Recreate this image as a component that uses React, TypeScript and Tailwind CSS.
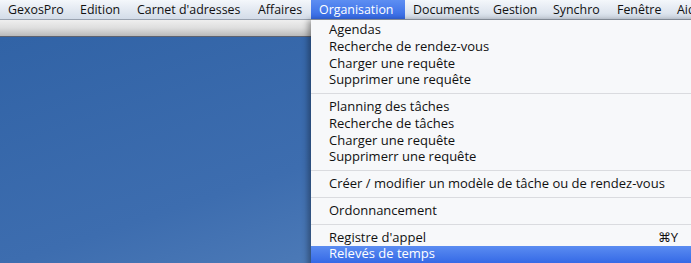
import React from 'react';

const menuBar = [
  { label: 'GexosPro', w: 'w-[72px]' },
  { label: 'Edition', w: 'w-[57px]' },
  { label: "Carnet d'adresses", w: 'w-[121px]' },
  { label: 'Affaires', w: 'w-[61px]' },
  { label: 'Organisation', w: 'w-[94px]', active: true },
  { label: 'Documents', w: 'w-[80px]' },
  { label: 'Gestion', w: 'w-[60px]' },
  { label: 'Synchro', w: 'w-[64px]' },
  { label: 'Fenêtre', w: 'w-[60px]' },
  { label: 'Aide', w: 'w-[60px]' },
];

type Item = { label: string; shortcut?: string; selected?: boolean };

const groups: Item[][] = [
  [
    { label: 'Agendas' },
    { label: 'Recherche de rendez-vous' },
    { label: 'Charger une requête' },
    { label: 'Supprimer une requête' },
  ],
  [
    { label: 'Planning des tâches' },
    { label: 'Recherche de tâches' },
    { label: 'Charger une requête' },
    { label: 'Supprimerr une requête' },
  ],
  [{ label: 'Créer / modifier un modèle de tâche ou de rendez-vous' }],
  [{ label: 'Ordonnancement' }],
  [
    { label: "Registre d'appel", shortcut: '⌘Y' },
    { label: 'Relevés de temps', selected: true },
  ],
];

const App = () => {
  return (
    <div
      className="relative h-[263px] w-[691px] overflow-hidden"
      style={{ fontFamily: '"Open Sans", "DejaVu Sans", sans-serif' }}
    >
      {/* Menu bar */}
      <div className="flex h-[20px] border-b border-[#9aa3b0] bg-linear-to-b from-[#f4f7fb] to-[#d3dce8] text-[12.4px] text-[#111]">
        {menuBar.map((m) => (
          <div
            key={m.label}
            className={`${m.w} shrink-0 pl-[8px] leading-[20px] whitespace-nowrap ${
              m.active ? 'bg-linear-to-b from-[#5d8ef2] to-[#3468e4] text-white' : ''
            }`}
          >
            {m.label}
          </div>
        ))}
      </div>

      {/* Window toolbar strip */}
      <div className="h-[17px] border-b border-[#5d6270] bg-linear-to-b from-[#efefef] via-[#dedede] to-[#bababa]" />

      {/* Desktop */}
      <div className="h-[230px] bg-linear-to-br from-[#3163a6] via-[#3d6daf] to-[#5f8ac1]" />

      {/* Dropdown menu */}
      <div className="absolute top-[20px] left-[311px] right-[-20px] bottom-[-20px] bg-[#f7f8fa] pt-[1.5px] text-[13px] text-[#111] shadow-[-3px_0_6px_rgba(0,0,0,0.35)]">
        {groups.map((g, gi) => (
          <div key={gi}>
            {gi > 0 && (
              <div className="flex h-[10px] items-center">
                <div className="h-px w-full bg-[#dadbdf]" />
              </div>
            )}
            {g.map((it) => (
              <div
                key={it.label}
                className={`flex h-[16.75px] items-center justify-between pl-[18px] pr-[33px] whitespace-nowrap ${
                  it.selected ? 'bg-linear-to-b from-[#5b8cf1] to-[#3569e6] text-white' : ''
                }`}
              >
                <span>{it.label}</span>
                {it.shortcut && <span>{it.shortcut}</span>}
              </div>
            ))}
          </div>
        ))}
      </div>
    </div>
  );
};

export default App;
